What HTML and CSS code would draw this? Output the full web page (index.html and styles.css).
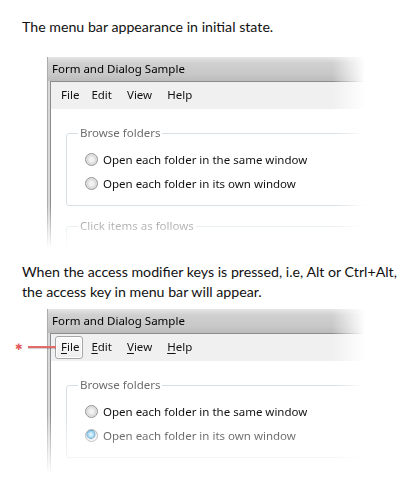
FILE: index.html
```html
<!DOCTYPE html>
<html lang="en">
<head>
    <meta charset="UTF-8">
    <title>Menu bar access keys</title>
    <link rel="stylesheet" href="styles.css">
</head>
<body>
    <div class="page">
        <p class="caption">The menu bar appearance in initial state.</p>

        <!-- Janela 1: estado inicial -->
        <div class="shot shot-first">
            <div class="gutter"></div>
            <div class="fade-x">
                <div class="window window-first">
                    <div class="titlebar">Form and Dialog Sample</div>
                    <div class="client">
                        <div class="menubar">
                            <span class="menu-item">File</span>
                            <span class="menu-item">Edit</span>
                            <span class="menu-item">View</span>
                            <span class="menu-item">Help</span>
                        </div>
                        <fieldset class="group">
                            <legend>Browse folders</legend>
                            <div class="radio-row"><span class="radio"></span>Open each folder in the same window</div>
                            <div class="radio-row"><span class="radio"></span>Open each folder in its own window</div>
                        </fieldset>
                        <fieldset class="group group-next">
                            <legend>Click items as follows</legend>
                        </fieldset>
                    </div>
                </div>
            </div>
        </div>

        <p class="caption caption-second">When the access modifier keys is pressed, i.e, Alt or Ctrl+Alt,<br>the access key in menu bar will appear.</p>

        <!-- Janela 2: teclas de acesso visíveis -->
        <div class="shot shot-second">
            <div class="gutter"></div>
            <div class="fade-x">
                <div class="window window-second">
                    <div class="titlebar">Form and Dialog Sample</div>
                    <div class="client">
                        <div class="menubar">
                            <span class="menu-item focused"><u>F</u>ile</span>
                            <span class="menu-item"><u>E</u>dit</span>
                            <span class="menu-item"><u>V</u>iew</span>
                            <span class="menu-item"><u>H</u>elp</span>
                        </div>
                        <fieldset class="group">
                            <legend>Browse folders</legend>
                            <div class="radio-row"><span class="radio"></span>Open each folder in the same window</div>
                            <div class="radio-row"><span class="radio checked"></span>Open each folder in its own window</div>
                        </fieldset>
                    </div>
                </div>
            </div>
            <div class="pointer">
                <span class="pointer-dot">&#10033;</span>
                <span class="pointer-line"></span>
            </div>
        </div>
    </div>
</body>
</html>
```

FILE: styles.css
```css
* {
    margin: 0;
    padding: 0;
    box-sizing: border-box;
}

body {
    background: #fff;
    color: #1a1a1a;
    font-family: Lato, "Liberation Sans", sans-serif;
}

.page {
    padding-top: 17px;
}

.caption {
    margin-left: 22px;
    font-size: 14.2px;
    line-height: 20px;
    color: #111;
}

.caption-second {
    margin-top: 14px;
}

.shot {
    position: relative;
    display: flex;
}

.shot-first {
    margin-top: 20px;
}

.shot-second {
    margin-top: 7px;
}

.gutter {
    width: 47px;
    flex-shrink: 0;
}

/* fade to the right */
.fade-x {
    width: 318px;
    -webkit-mask-image: linear-gradient(to right, #000 285px, transparent 318px);
    mask-image: linear-gradient(to right, #000 285px, transparent 318px);
}

.window {
    display: flex;
    flex-direction: column;
    background: #d6d8da;
    border-left: 1px solid #a9acaf;
    font-family: "Noto Sans", sans-serif;
    font-size: 11.5px;
    color: #111;
}

/* fade to the bottom */
.window-first {
    height: 191px;
    -webkit-mask-image: linear-gradient(to bottom, #000 148px, transparent 191px);
    mask-image: linear-gradient(to bottom, #000 148px, transparent 191px);
}

.window-second {
    height: 171px;
    -webkit-mask-image: linear-gradient(to bottom, #000 105px, transparent 165px);
    mask-image: linear-gradient(to bottom, #000 105px, transparent 165px);
}

.titlebar {
    height: 24px;
    line-height: 24px;
    padding-left: 4px;
    font-size: 11.5px;
    color: #000;
    background: linear-gradient(to bottom, #e6e6e6, #d0d0d0 25%, #c8c8c8 70%, #bcbcbc);
}

.client {
    flex-grow: 1;
    margin-left: 2px;
    border-left: 1px solid #8c8c8c;
    border-top: 1px solid #8c8c8c;
    background: #fff;
    overflow: hidden;
}

.menubar {
    display: flex;
    align-items: center;
    height: 27px;
    padding-left: 4px;
    background: #f0f0f0;
    gap: 1px;
}

.menu-item {
    padding: 3px 6px 4px;
    border: 1px solid transparent;
    border-radius: 3px;
    line-height: 14px;
}

.menubar .menu-item:first-child {
    padding-left: 5px;
    padding-right: 3px;
}

.menu-item u {
    text-underline-offset: 2px;
}

.menu-item.focused {
    border-color: #a4a7aa;
    background: linear-gradient(to bottom, #fbfbfb, #ededed);
    box-shadow: inset 0 0 0 1px #fff;
}

.group {
    width: 330px;
    margin: 16px 0 0 15px;
    padding: 6px 0 10px 0;
    border: 1px solid #d5dfe5;
    border-radius: 3px;
}

.group legend {
    margin-left: 11px;
    padding: 0 2px;
    line-height: 16px;
    color: #6d6d6d;
}

.group-next {
    margin-top: 12px;
    height: 60px;
}

.radio-row {
    display: flex;
    align-items: center;
    gap: 5px;
    height: 24px;
    padding-left: 18px;
}

.radio {
    width: 13px;
    height: 13px;
    flex-shrink: 0;
    border-radius: 50%;
    border: 1px solid #8f9296;
    background: radial-gradient(circle, #f2f2f2 0 2px, #d9d9d9 4.5px, #e9e9e9 5.5px, #fafafa 6.5px);
}

.radio.checked {
    background: radial-gradient(circle at 45% 40%, #c6ecfd 0 1px, #5fb4e0 3.5px, #2f86bf 4.2px, #e4e4e4 4.8px, #fafafa 6.5px);
}

/* marcador vermelho */
.pointer {
    position: absolute;
    left: 15px;
    top: 33px;
    display: flex;
    align-items: center;
}

.pointer-dot {
    color: #e25b5b;
    font-size: 9px;
    line-height: 10px;
    font-family: "DejaVu Sans", sans-serif;
}

.pointer-line {
    width: 28px;
    height: 2px;
    margin-left: 5px;
    background: #e46a6a;
    box-shadow: 0 1px 1px rgba(0, 0, 0, 0.2);
}
```
